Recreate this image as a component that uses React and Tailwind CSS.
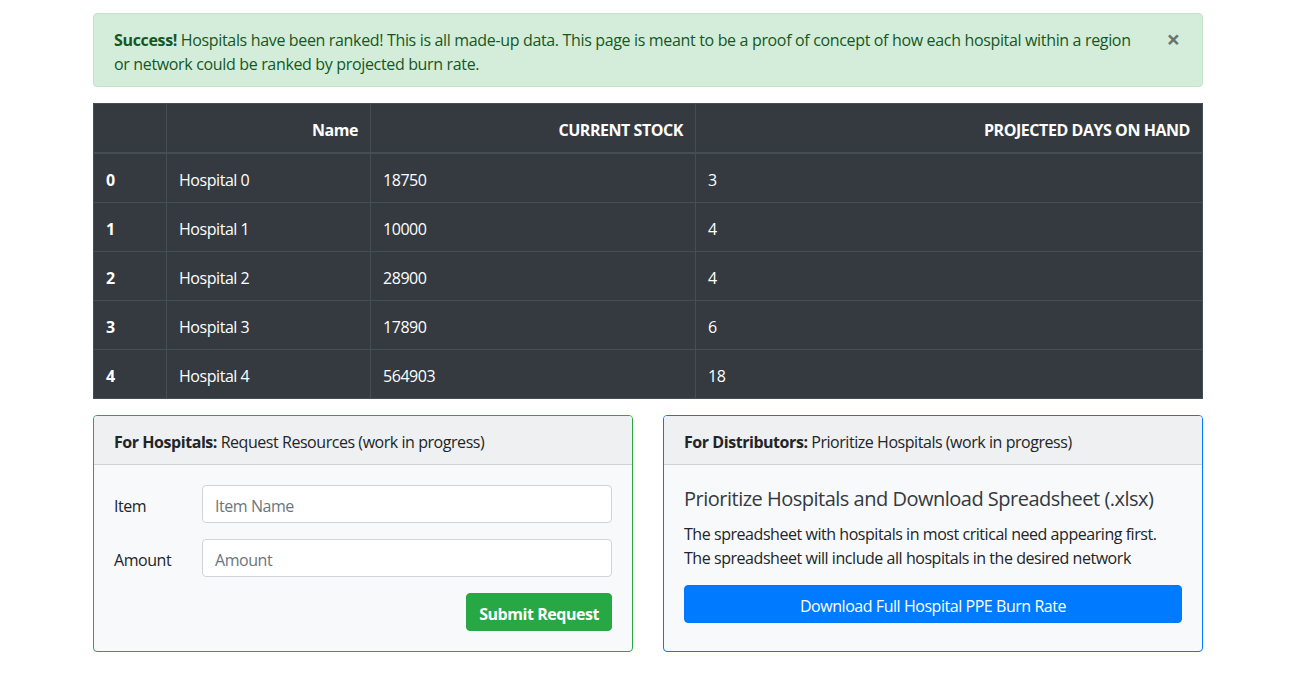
export default function App() {
  const rows = [
    ["0", "Hospital 0", "18750", "3"],
    ["1", "Hospital 1", "10000", "4"],
    ["2", "Hospital 2", "28900", "4"],
    ["3", "Hospital 3", "17890", "6"],
    ["4", "Hospital 4", "564903", "18"],
  ];
  const cell = "border border-[#454d55] px-[12px] pt-[14px] pb-[10px]";
  return (
    <div className="min-h-[683px] bg-white text-[16px] leading-[24px] tracking-[-0.45px] text-[#212529]" style={{ fontFamily: '"Open Sans", "Noto Sans", sans-serif' }}>
      <div className="ml-[93px] w-[1110px] pt-[13px]">
        <div className="relative mb-[16px] rounded-[4px] border border-[#c3e6cb] bg-[#d4edda] pt-[14px] pb-[10px] pl-[20px] pr-[60px] tracking-[-0.34px] text-[#155724]">
          <strong className="font-bold">Success!</strong> Hospitals have been ranked! This is all made-up data. This page is meant to be a proof of concept of how each hospital within a region or network could be ranked by projected burn rate.
          <span className="absolute right-[22px] top-[13px] text-[24px] font-bold leading-[24px] text-black opacity-50">×</span>
        </div>

        <table className="mb-[16px] w-full border-collapse bg-[#343a40] text-white">
          <thead>
            <tr>
              <th className={`w-[73px] ${cell} border-b-2`}></th>
              <th className={`w-[204px] ${cell} border-b-2 text-right font-bold`}>Name</th>
              <th className={`w-[325px] ${cell} border-b-2 text-right font-bold`}>CURRENT STOCK</th>
              <th className={`${cell} border-b-2 text-right font-bold`}>PROJECTED DAYS ON HAND</th>
            </tr>
          </thead>
          <tbody>
            {rows.map((r) => (
              <tr key={r[0]}>
                <th className={`${cell} text-left font-bold`}>{r[0]}</th>
                <td className={cell}>{r[1]}</td>
                <td className={cell}>{r[2]}</td>
                <td className={cell}>{r[3]}</td>
              </tr>
            ))}
          </tbody>
        </table>

        <div className="flex gap-[30px]">
          <div className="flex w-[540px] flex-col overflow-hidden rounded-[4px] border border-[#28a745] bg-[#f8f9fa]">
            <div className="border-b border-[rgba(0,0,0,0.125)] bg-[#eff0f1] px-[20px] pt-[14px] pb-[10px]">
              <strong className="font-bold">For Hospitals:</strong> Request Resources (work in progress)
            </div>
            <div className="flex flex-col p-[20px]">
              <div className="mb-[16px] flex items-center">
                <label className="w-[88px] pt-[4px]">Item</label>
                <div className="h-[38px] flex-1 rounded-[4px] border border-[#ced4da] bg-white px-[12px] pt-[8px] pb-[4px] text-[#6c757d]">Item Name</div>
              </div>
              <div className="mb-[16px] flex items-center">
                <label className="w-[88px] pt-[4px]">Amount</label>
                <div className="h-[38px] flex-1 rounded-[4px] border border-[#ced4da] bg-white px-[12px] pt-[8px] pb-[4px] text-[#6c757d]">Amount</div>
              </div>
              <div className="flex justify-end">
                <button className="h-[38px] rounded-[4px] border border-[#28a745] bg-[#28a745] px-[12px] pt-[3px] font-bold text-white">Submit Request</button>
              </div>
            </div>
          </div>

          <div className="flex w-[540px] flex-col overflow-hidden rounded-[4px] border border-[#007bff] bg-[#f8f9fa]">
            <div className="border-b border-[rgba(0,0,0,0.125)] bg-[#eff0f1] px-[20px] pt-[14px] pb-[10px]">
              <strong className="font-bold">For Distributors:</strong> Prioritize Hospitals (work in progress)
            </div>
            <div className="flex flex-col p-[20px]">
              <h5 className="mb-[9px] pt-[2px] text-[20px] font-normal leading-[24px] tracking-[-0.5px] text-[#343a40]">Prioritize Hospitals and Download Spreadsheet (.xlsx)</h5>
              <p className="mb-[15px] pt-[2px]">The spreadsheet with hospitals in most critical need appearing first.<br />The spreadsheet will include all hospitals in the desired network</p>
              <button className="h-[38px] w-full rounded-[4px] border border-[#007bff] bg-[#007bff] px-[12px] pt-[3px] text-white">Download Full Hospital PPE Burn Rate</button>
            </div>
          </div>
        </div>
      </div>
    </div>
  );
}
